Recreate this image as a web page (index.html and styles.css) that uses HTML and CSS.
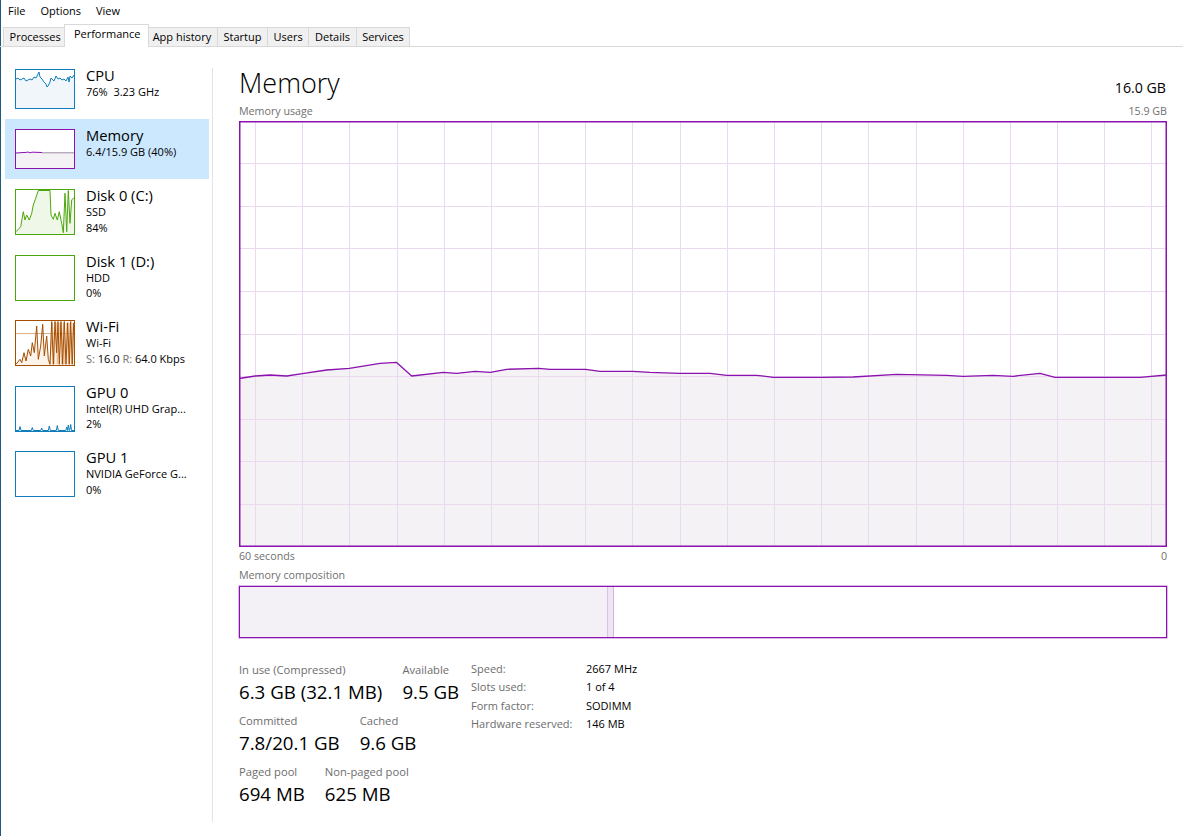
FILE: index.html
```html
<!DOCTYPE html>
<html lang="en">
<head>
<meta charset="utf-8">
<title>Task Manager - Performance</title>
<link rel="stylesheet" href="styles.css">
</head>
<body>
<div class="window">
  <nav class="menubar">
    <span>File</span><span>Options</span><span>View</span>
  </nav>
  <div class="tabstrip">
    <div class="tab">Processes</div>
    <div class="tab active">Performance</div>
    <div class="tab">App history</div>
    <div class="tab">Startup</div>
    <div class="tab">Users</div>
    <div class="tab">Details</div>
    <div class="tab">Services</div>
  </div>
  <div class="content">
    <aside class="sidebar">
      <div class="item">
        <div class="thumb cpu">
          <svg viewBox="0 0 58 38" width="58" height="38">
            <polygon class="fill" points="0,9 2,8 4,10 6,9 8,8 10,11 12,10 14,9 16,10 18,7 20,8 22,4 23,2 24,7 26,9 28,12 30,14 31,17 32,16 34,12 35,8 36,9 38,11 40,6 42,9 44,8 46,10 48,9 50,11 52,7 53,12 54,6 56,8 58,5 58,38 0,38"/>
            <polyline class="line" points="0,9 2,8 4,10 6,9 8,8 10,11 12,10 14,9 16,10 18,7 20,8 22,4 23,2 24,7 26,9 28,12 30,14 31,17 32,16 34,12 35,8 36,9 38,11 40,6 42,9 44,8 46,10 48,9 50,11 52,7 53,12 54,6 56,8 58,5"/>
          </svg>
        </div>
        <div class="info">
          <div class="name">CPU</div>
          <div class="sub">76%&nbsp; 3.23 GHz</div>
        </div>
      </div>
      <div class="item selected">
        <div class="thumb mem">
          <svg viewBox="0 0 58 38" width="58" height="38">
            <rect class="fill" x="0" y="22.6" width="58" height="16"/>
            <polyline class="soft" points="26,22.8 58,22.8"/>
            <polyline class="line" points="0,23 6,22.6 10,22.4 12,22 14,22.8 16,22.2 20,22.3 26,22.5"/>
          </svg>
        </div>
        <div class="info">
          <div class="name">Memory</div>
          <div class="sub">6.4/15.9 GB (40%)</div>
        </div>
      </div>
      <div class="item tall">
        <div class="thumb disk">
          <svg viewBox="0 0 58 44" width="58" height="44">
            <polygon class="fill" points="0,41.7 2.3,39.3 4.7,36.7 7.3,21.7 9,30 10.7,25 13.3,30 15.7,23.3 17.3,15 19.7,8.3 22.3,0.5 34,0.5 35,25 37.3,29.3 39,23.3 41.3,30 43.3,21.7 45.7,33.3 47.3,42.7 49,3.3 50.7,41.7 52.3,0.5 54,33.3 55.7,10 57.3,8.3 58,8.3 58,44 0,44"/>
            <polyline class="line" points="0,41.7 2.3,39.3 4.7,36.7 7.3,21.7 9,30 10.7,25 13.3,30 15.7,23.3 17.3,15 19.7,8.3 22.3,0.5 34,0.5 35,25 37.3,29.3 39,23.3 41.3,30 43.3,21.7 45.7,33.3 47.3,42.7 49,3.3 50.7,41.7 52.3,0.5 54,33.3 55.7,10 57.3,8.3 58,8.3"/>
          </svg>
        </div>
        <div class="info">
          <div class="name">Disk 0 (C:)</div>
          <div class="sub">SSD</div>
          <div class="sub">84%</div>
        </div>
      </div>
      <div class="item tall">
        <div class="thumb disk"></div>
        <div class="info">
          <div class="name">Disk 1 (D:)</div>
          <div class="sub">HDD</div>
          <div class="sub">0%</div>
        </div>
      </div>
      <div class="item tall">
        <div class="thumb wifi">
          <svg viewBox="0 0 58 44" width="58" height="44">
            <polygon class="fill" points="0,43.3 4,38.3 5.7,41.7 8,31.7 10,40 12.3,28.3 14.7,35 16.3,21.7 18.3,31.7 20.7,5 22.3,38.3 24.7,25 26.7,3.3 28.3,35 30.7,15 32.3,38.3 34,43.3 35.7,0.5 37.3,43.3 39,0.5 40.7,31.7 42,0.5 43.3,43.3 45,0.5 46.7,43.3 48.3,0.5 50,43.3 51.7,1.7 53.3,43.3 54.7,0.5 56.3,43.3 57.7,1.7 58,44 0,44"/>
            <line class="grid" x1="0" y1="12.6" x2="58" y2="12.6"/>
            <polyline class="soft" points="34,43 36.5,2 38,43 40,2 41.3,43 44,2 45.7,43 47.5,2 49,43 51,2 52.5,43 54,2 55.5,43 57,2"/>
            <polyline class="line" points="0,43.3 4,38.3 5.7,41.7 8,31.7 10,40 12.3,28.3 14.7,35 16.3,21.7 18.3,31.7 20.7,5 22.3,38.3 24.7,25 26.7,3.3 28.3,35 30.7,15 32.3,38.3 34,43.3 35.7,0.5 37.3,43.3 39,0.5 40.7,31.7 42,0.5 43.3,43.3 45,0.5 46.7,43.3 48.3,0.5 50,43.3 51.7,1.7 53.3,43.3 54.7,0.5 56.3,43.3 57.7,1.7"/>
          </svg>
        </div>
        <div class="info">
          <div class="name">Wi-Fi</div>
          <div class="sub">Wi-Fi</div>
          <div class="sub"><span class="dim">S:</span> 16.0 <span class="dim">R:</span> 64.0 Kbps</div>
        </div>
      </div>
      <div class="item tall">
        <div class="thumb gpu">
          <svg viewBox="0 0 58 44" width="58" height="44">
            <polygon class="fill" points="0,43.5 3,43.5 4,39.5 5,43.5 15.3,43.5 16.3,40.5 17.3,43.5 24.7,43.5 25.7,41 26.7,43.5 32.3,43.5 33.3,39 34.3,43.5 40.3,43.5 41.3,38.5 42.3,43.5 49.7,43.5 50.7,40 51.5,43.5 52.3,38 53.3,43.5 54.2,41 54.7,37.5 55.5,43.5 58,43.5 58,44 0,44"/>
            <polyline class="line" points="0,43.5 3,43.5 4,39.5 5,43.5 15.3,43.5 16.3,40.5 17.3,43.5 24.7,43.5 25.7,41 26.7,43.5 32.3,43.5 33.3,39 34.3,43.5 40.3,43.5 41.3,38.5 42.3,43.5 49.7,43.5 50.7,40 51.5,43.5 52.3,38 53.3,43.5 54.2,41 54.7,37.5 55.5,43.5 58,43.5"/>
          </svg>
        </div>
        <div class="info">
          <div class="name">GPU 0</div>
          <div class="sub">Intel(R) UHD Grap...</div>
          <div class="sub">2%</div>
        </div>
      </div>
      <div class="item tall">
        <div class="thumb gpu"></div>
        <div class="info">
          <div class="name">GPU 1</div>
          <div class="sub">NVIDIA GeForce G...</div>
          <div class="sub">0%</div>
        </div>
      </div>
    </aside>
    <div class="divider"></div>
    <main class="panel">
      <div class="head">
        <h1>Memory</h1>
        <span class="total">16.0 GB</span>
      </div>
      <div class="caption"><span>Memory usage</span><span>15.9 GB</span></div>
      <div class="chart">
        <svg viewBox="0 0 928 426" width="928" height="426">
          <polygon class="area" points="0,257.5 16.3,255 31,254 47.7,255 63.3,252.7 87.7,249 110.3,247.3 141,242.3 157.3,241.3 172.7,255 204.3,251.3 217.7,252.3 236,250.3 251.3,251.3 267.7,248.3 299.7,247.3 311,248.3 346.7,248.3 361,250.3 393.7,250.3 411,251.3 441,252.3 471,252.3 487.7,254.3 517.7,254.3 534.3,256.3 581,256.3 614,256 657.7,253.3 707.7,254.3 724,255.3 754,254.3 774,255.3 801,252.3 816,256.3 901,256.3 927.7,254 928,426 0,426"/>
          <path class="gridlines" d="M0 42.5H928M0 85.5H928M0 127.5H928M0 170.5H928M0 213.5H928M0 255.5H928M0 298.5H928M0 340.5H928M0 383.5H928M16.5 0V426M63.5 0V426M110.5 0V426M158.5 0V426M205.5 0V426M252.5 0V426M299.5 0V426M346.5 0V426M393.5 0V426M441.5 0V426M488.5 0V426M535.5 0V426M582.5 0V426M629.5 0V426M677.5 0V426M724.5 0V426M771.5 0V426M818.5 0V426M865.5 0V426M912.5 0V426"/>
          <polyline class="usage" points="0,257.5 16.3,255 31,254 47.7,255 63.3,252.7 87.7,249 110.3,247.3 141,242.3 157.3,241.3 172.7,255 204.3,251.3 217.7,252.3 236,250.3 251.3,251.3 267.7,248.3 299.7,247.3 311,248.3 346.7,248.3 361,250.3 393.7,250.3 411,251.3 441,252.3 471,252.3 487.7,254.3 517.7,254.3 534.3,256.3 581,256.3 614,256 657.7,253.3 707.7,254.3 724,255.3 754,254.3 774,255.3 801,252.3 816,256.3 901,256.3 927.7,254"/>
          <rect class="frame" x="0.75" y="0.75" width="926.5" height="424.5"/>
        </svg>
      </div>
      <div class="caption axis"><span>60 seconds</span><span>0</span></div>
      <div class="caption comp-label"><span>Memory composition</span></div>
      <div class="comp">
        <div class="inuse"></div>
        <div class="modified"></div>
      </div>
      <div class="stats">
        <div class="stat-block">
          <div class="stat-row">
            <div class="stat"><div class="label">In use (Compressed)</div><div class="value">6.3 GB (32.1 MB)</div></div>
            <div class="stat"><div class="label">Available</div><div class="value">9.5 GB</div></div>
          </div>
          <div class="stat-row">
            <div class="stat"><div class="label">Committed</div><div class="value">7.8/20.1 GB</div></div>
            <div class="stat"><div class="label">Cached</div><div class="value">9.6 GB</div></div>
          </div>
          <div class="stat-row">
            <div class="stat"><div class="label">Paged pool</div><div class="value">694 MB</div></div>
            <div class="stat"><div class="label">Non-paged pool</div><div class="value">625 MB</div></div>
          </div>
        </div>
        <dl class="specs">
          <dt>Speed:</dt><dd>2667 MHz</dd>
          <dt>Slots used:</dt><dd>1 of 4</dd>
          <dt>Form factor:</dt><dd>SODIMM</dd>
          <dt>Hardware reserved:</dt><dd>146 MB</dd>
        </dl>
      </div>
    </main>
  </div>
</div>
</body>
</html>
```

FILE: styles.css
```css
* { box-sizing: border-box; }

html, body {
  margin: 0;
  padding: 0;
  background: #ffffff;
}

body {
  font-family: "Open Sans", "Noto Sans", sans-serif;
  color: #000;
  width: 1183px;
  height: 836px;
  overflow: hidden;
}

.window {
  width: 1183px;
  height: 836px;
  background: #ffffff;
  box-shadow: inset 1px 0 0 #1d5c7c;
  display: flex;
  flex-direction: column;
}

/* menu */
.menubar {
  height: 22px;
  display: flex;
  gap: 15px;
  padding-left: 8px;
  font-size: 11px;
  line-height: 22px;
  color: #000;
}

/* tabs */
.tabstrip {
  height: 25px;
  display: flex;
  align-items: flex-end;
  padding-left: 4px;
  border-bottom: 1px solid #d9d9d9;
  font-size: 11px;
}

.tab {
  height: 19px;
  line-height: 18px;
  padding: 0 5.6px;
  border: 1px solid #d9d9d9;
  border-bottom: none;
  background: #f0f0f0;
  margin-left: -1px;
  white-space: nowrap;
  color: #000;
}

.tab.active {
  position: relative;
  z-index: 1;
  height: 23px;
  margin: 0 -2px -1px -3px;
  padding: 0 7.6px 0 8.6px;
  background: #ffffff;
}

/* content */
.content {
  flex: 1;
  display: flex;
  min-height: 0;
}

.sidebar {
  width: 212px;
  flex: none;
  padding-top: 12px;
}

.item {
  margin-left: 5px;
  width: 204px;
  height: 60px;
  padding: 10px 0 0 10px;
  display: flex;
  align-items: flex-start;
  gap: 11px;
}

.item.tall { height: 65.6px; }

.item.selected { background: #cce8ff; }

.thumb {
  width: 60px;
  height: 40px;
  flex: none;
  border: 1px solid #117dbb;
  background: #ffffff;
}

.thumb svg { display: block; }

.item.tall .thumb { height: 46px; }

.thumb.cpu, .thumb.gpu { border-color: #117dbb; }
.thumb.cpu .fill, .thumb.gpu .fill { fill: #f1f6fa; }
.thumb.cpu .line, .thumb.gpu .line { fill: none; stroke: #117dbb; stroke-width: 1; }

.thumb.mem { border-color: #8b12ae; }
.thumb.mem .fill { fill: #f4f2f5; }
.thumb.mem .line { fill: none; stroke: #8b12ae; stroke-width: 1; }
.thumb.mem .soft { fill: none; stroke: #9d8aa6; stroke-width: 1; }

.thumb.disk { border-color: #4da60c; }
.thumb.disk .fill { fill: #eff7e9; }
.thumb.disk .line { fill: none; stroke: #4da60c; stroke-width: 1; }

.thumb.wifi { border-color: #a74f01; }
.thumb.wifi .fill { fill: #fcf3eb; }
.thumb.wifi .grid { stroke: #dcae85; stroke-width: 1; }
.thumb.wifi .soft { fill: none; stroke: #e8b68a; stroke-width: 0.8; }
.thumb.wifi .line { fill: none; stroke: #a74f01; stroke-width: 1; }

.info {
  margin-top: -2px;
  white-space: nowrap;
}

.name {
  font-size: 14.7px;
  line-height: 17px;
  color: #000;
}

.sub {
  font-size: 11px;
  line-height: 15.5px;
  color: #000;
}

.dim { color: #6d6d6d; }

.divider {
  width: 1px;
  flex: none;
  margin-top: 21px;
  height: 754px;
  background: #e3e3e3;
}

/* panel */
.panel {
  flex: 1;
  padding: 18px 16px 0 26px;
  min-width: 0;
}

.head {
  display: flex;
  justify-content: space-between;
  align-items: baseline;
}

.head h1 {
  margin: 0;
  font-size: 27px;
  font-weight: 300;
  line-height: 36px;
  color: #000;
}

.total {
  font-size: 14.2px;
  color: #000;
  margin-right: 1px;
}

.caption {
  display: flex;
  justify-content: space-between;
  font-size: 10.7px;
  line-height: 14px;
  color: #707070;
  margin-top: 3px;
}

.caption.axis { margin-top: 2px; }
.caption.comp-label { margin-top: 5px; }

.chart {
  margin-top: 3px;
  width: 928px;
  height: 426px;
}

.chart svg { display: block; }

.chart .area { fill: #f4f2f5; }
.chart .gridlines { fill: none; stroke: #ead9f1; stroke-width: 1; }
.chart .usage { fill: none; stroke: #8b12ae; stroke-width: 1.3; stroke-linejoin: round; }
.chart .frame { fill: none; stroke: #8b12ae; stroke-width: 1.5; }

.comp {
  margin-top: 4px;
  height: 52px;
  display: flex;
  border: 1px solid #8b12ae;
  box-shadow: 0 0 0 0.5px rgba(139, 18, 174, 0.6);
}

.comp .inuse {
  width: 368px;
  background: #f3f1f5;
  border-right: 1px solid #d9c2e4;
}

.comp .modified {
  width: 6px;
  background: #efe6f3;
  border-right: 1px solid #d2b4df;
}

/* stats */
.stats {
  margin-top: 24px;
  display: flex;
  align-items: flex-start;
}

.stat-block {
  width: 232px;
  flex: none;
}

.stat-row {
  display: flex;
  gap: 20px;
  margin-bottom: 8px;
  white-space: nowrap;
}

.label {
  font-size: 11.2px;
  line-height: 15px;
  color: #6d6d6d;
}

.value {
  margin-top: 2px;
  font-size: 18.7px;
  line-height: 26px;
  color: #000;
}

.specs {
  margin: -2px 0 0 0;
  display: grid;
  grid-template-columns: 115px auto;
  font-size: 11px;
  line-height: 18.3px;
  white-space: nowrap;
}

.specs dt { color: #6d6d6d; }
.specs dd { margin: 0; color: #000; }
```
